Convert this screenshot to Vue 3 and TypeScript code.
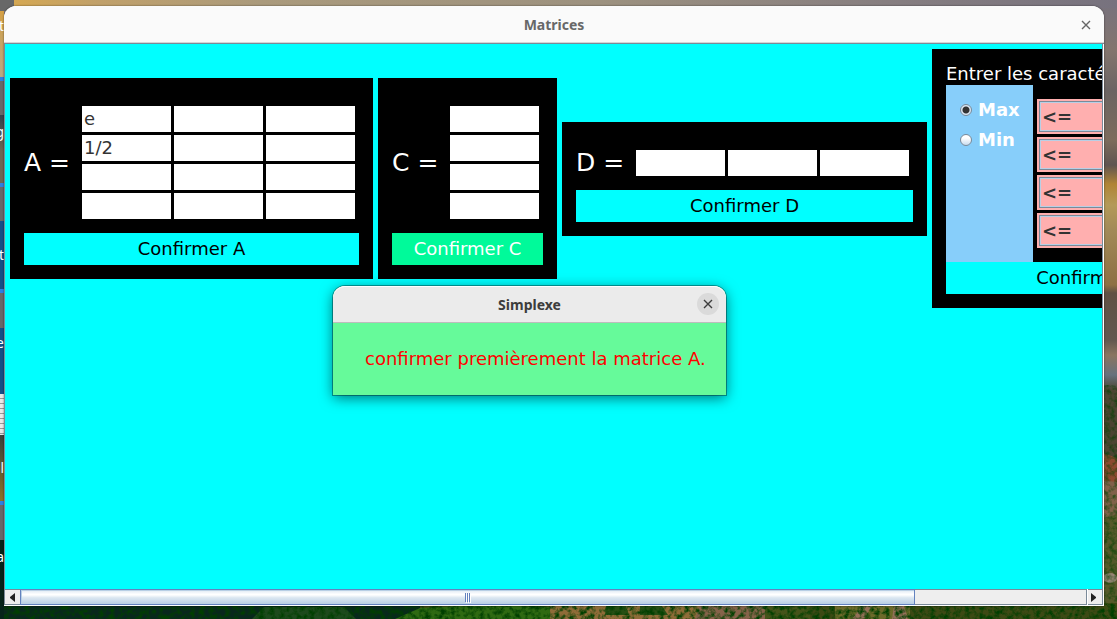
<script setup lang="ts">
import { ref } from 'vue'

interface MatrixPanel {
  name: string
  rows: number
  cols: number
  values: string[]
}

const panels = ref<MatrixPanel[]>([
  { name: 'A', rows: 4, cols: 3, values: ['e', '', '', '1/2', '', '', '', '', '', '', '', ''] },
  { name: 'C', rows: 4, cols: 1, values: ['', '', '', ''] },
  { name: 'D', rows: 1, cols: 3, values: ['', '', ''] },
])

const goal = ref('max')
const signs = ref(['<=', '<=', '<=', '<='])
const dialogOpen = ref(true)

const desktopItems = [
  { kind: 'bar', text: '' },
  { kind: 'sky', text: 't' },
  { kind: 'line', text: '' },
  { kind: 'bar', text: 'g' },
  { kind: 'line', text: '' },
  { kind: 'bar', text: '' },
  { kind: 'blue', text: 't' },
  { kind: 'line', text: '' },
  { kind: 'bar', text: '' },
  { kind: 'blue', text: 'e' },
  { kind: 'paper', text: '' },
  { kind: 'rock', text: 'l' },
  { kind: 'line', text: '' },
  { kind: 'bar', text: '' },
  { kind: 'forest', text: 'a' },
]
</script>

<template>
  <div class="desktop">
    <svg class="scenery" aria-hidden="true" preserveAspectRatio="none" viewBox="0 0 1117 619">
      <defs>
        <filter id="leaves" x="0" y="0" width="100%" height="100%">
          <feTurbulence type="fractalNoise" baseFrequency="0.2" numOctaves="3" seed="4" />
          <feColorMatrix type="matrix" values="0 0 0 0 0  0 0 0 0 0.05  0 0 0 0 0  2.6 0 0 0 -1" />
        </filter>
      </defs>
      <path d="M1100 384l17 10v225h-17z" fill="#4b4532" />
      <path d="M1100 452l17 6v36l-17 6z" fill="#8c4a30" />
      <path d="M1100 480l17 2v34l-17 2z" fill="#80614a" />
      <path d="M1100 520l17-6v105h-17z" fill="#55592a" />
      <ellipse cx="1110" cy="578" rx="7" ry="5" fill="#988575" />
      <path d="M0 603h1117v16H0z" fill="#3d4a14" />
      <path d="M0 603h420v16H0z" fill="#08281c" />
      <path d="M252 619l12-12h80l12 12z" fill="#1d4a1c" />
      <path d="M395 619l25-11 60-3 72 2v12z" fill="#2f6a12" />
      <path d="M550 603h215v16H550z" fill="#8f6c38" />
      <path d="M606 606h20l3 9h-24zM640 606h22l6 9h-28z" fill="#274f14" />
      <path d="M700 604h65v15h-70z" fill="#86634a" />
      <path d="M765 604h45v15h-45z" fill="#45541a" />
      <path d="M835 603h75v16h-75z" fill="#6d6a2a" />
      <path d="M862 606h10l-8 13h-12zM894 606h10l4 13h-16z" fill="#957058" />
      <rect y="604" width="1117" height="15" filter="url(#leaves)" />
      <rect x="1103" y="385" width="14" height="234" filter="url(#leaves)" opacity=".6" />
    </svg>
    <div class="edge" aria-hidden="true">
      <div v-for="(item, i) in desktopItems" :key="i" :class="['scrap', item.kind, 's' + i]">{{ item.text }}</div>
    </div>

    <main class="window">
      <header class="titlebar">
        <h1>Matrices</h1>
        <button class="close" type="button" aria-label="Fermer">
          <svg viewBox="0 0 10 10" width="10" height="10"><path d="M1 1l8 8M9 1L1 9" /></svg>
        </button>
      </header>

      <div class="viewport">
        <div class="panels">
          <form v-for="p in panels" :key="p.name" class="panel" @submit.prevent>
            <div class="matrix">
              <span :class="['name', { wide: p.name === 'D' }]">{{ p.name }} =</span>
              <div :class="['cells', 'cols-' + p.cols]">
                <input
                  v-for="(_, i) in p.values"
                  :key="i"
                  v-model="p.values[i]"
                  type="text"
                  :aria-label="`${p.name} ${Math.floor(i / p.cols) + 1}, ${(i % p.cols) + 1}`"
                />
              </div>
            </div>
            <button type="submit" :class="['confirm', { active: p.name === 'C' }]">Confirmer {{ p.name }}</button>
          </form>

          <form class="panel traits" @submit.prevent>
            <h2>Entrer les caractéristiques</h2>
            <div class="options">
              <div class="goals">
                <label><input v-model="goal" type="radio" name="goal" value="max" />Max</label>
                <label><input v-model="goal" type="radio" name="goal" value="min" />Min</label>
              </div>
              <div class="signs">
                <div v-for="(_, i) in signs" :key="i" class="sign">
                  <select v-model="signs[i]" :aria-label="`Contrainte ${i + 1}`">
                    <option>&lt;=</option>
                    <option>=</option>
                    <option>&gt;=</option>
                  </select>
                </div>
              </div>
            </div>
            <button type="submit" class="confirm">Confirmer</button>
          </form>
        </div>
      </div>

      <div class="scrollbar">
        <button type="button" class="arrow left" aria-label="Défiler à gauche">
          <svg viewBox="0 0 5 9" width="5" height="9"><path d="M5 0v9L0 5V4z" /></svg>
        </button>
        <div class="track">
          <div class="thumb"><i></i><i></i><i></i></div>
        </div>
        <button type="button" class="arrow right" aria-label="Défiler à droite">
          <svg viewBox="0 0 5 9" width="5" height="9"><path d="M0 0v9l5-4V4z" /></svg>
        </button>
      </div>
    </main>

    <section v-if="dialogOpen" class="dialog" role="dialog" aria-labelledby="dialog-title">
      <header class="dialog-bar">
        <h2 id="dialog-title">Simplexe</h2>
        <button class="close round" type="button" aria-label="Fermer" @click="dialogOpen = false">
          <svg viewBox="0 0 10 10" width="10" height="10"><path d="M1 1l8 8M9 1L1 9" /></svg>
        </button>
      </header>
      <p>confirmer premièrement la matrice A.</p>
    </section>
  </div>
</template>

<style>
body {
  margin: 0;
}
</style>

<style scoped>
* {
  box-sizing: border-box;
}
.desktop {
  position: relative;
  display: flex;
  height: 100vh;
  padding: 6px 13px 13px 4px;
  overflow: hidden;
  font-family: "DejaVu Sans", sans-serif;
  font-size: 18px;
  background:
    linear-gradient(90deg, #d8a94f 0, #c0a06a 100px, #aa9a7c 260px, #9c917f 600px, #857d80 900px, #77727e) top / 100% 8px no-repeat,
    linear-gradient(#77727e 0, #83756e 50px, #6b6463 90px, #7c6c5c 140px, #5f5450 165px, #b08435 184px, #b49a58 205px, #a28a58 230px, #8d7043 285px, #5f5144 293px, #625850 340px, #8a7560 355px, #67727d 375px, #4b4532 390px, #4b4532);
}
.scenery {
  position: absolute;
  inset: 0;
  width: 100%;
  height: 100%;
}
.edge {
  position: absolute;
  left: 0;
  top: 0;
  width: 14px;
  height: 100%;
  overflow: hidden;
  display: flex;
  flex-direction: column;
  font-family: "Noto Sans", sans-serif;
  font-size: 14px;
  line-height: 20px;
  color: #fff;
}
.scrap {
  display: flex;
  flex: none;
  align-items: center;
  justify-content: flex-end;
  width: 4px;
}
.bar { background: #686868; }
.sky { background: linear-gradient(#d5a044, #b8a883); }
.line { height: 4px; background: #2f80e0; }
.blue { background: #164e86; }
.paper { background: repeating-linear-gradient(#e8e8e8 0, #e8e8e8 4px, #999 4px, #999 5px); }
.rock { background: linear-gradient(#39413c, #8b7228); }
.forest { background: #06241a; }
.s0 { width: 14px; height: 11px; }
.s1 { height: 66px; padding-bottom: 36px; }
.s3 { height: 102px; background: linear-gradient(#686868 34px, #34414c 34px, #6d6655 70px); }
.s5 { height: 34px; }
.s6 { height: 68px; }
.s8 { height: 35px; }
.s9 { height: 66px; padding-bottom: 36px; }
.s10 { height: 41px; }
.s11 { height: 66px; }
.s13 { height: 35px; }
.s14 { height: 79px; padding-bottom: 46px; }

.window {
  position: relative;
  display: flex;
  flex: 1;
  flex-direction: column;
  min-width: 0;
  overflow: hidden;
  border-radius: 12px 12px 0 0;
  box-shadow: 0 0 2px rgba(0, 0, 0, 0.6);
  background: #fff;
}
.titlebar,
.dialog-bar {
  position: relative;
  display: flex;
  flex: none;
  align-items: center;
  justify-content: center;
}
.titlebar {
  height: 38px;
  border-bottom: 1px solid #7a8a99;
  background: linear-gradient(#fafafa 36px, #d5d5d5 36px);
  color: #686868;
}
.titlebar h1,
.dialog-bar h2 {
  margin: 0;
  font: bold 14px/20px "Noto Sans", sans-serif;
}
.close {
  position: absolute;
  right: 7px;
  display: flex;
  align-items: center;
  justify-content: center;
  width: 22px;
  height: 22px;
  padding: 0;
  border: 0;
  border-radius: 50%;
  background: none;
}
.close svg {
  fill: none;
  stroke: #666;
  stroke-width: 1.4;
}
.close.round {
  background: #dadada;
}
.close.round svg {
  stroke: #3d3d3d;
}

.viewport {
  flex: 1;
  min-height: 0;
  margin-right: 1px;
  overflow: hidden;
  border: solid #7a8a99;
  border-width: 0 1px;
  background: #0ff;
}
.panels {
  display: flex;
  align-items: center;
  gap: 5px;
  width: max-content;
  padding: 5px;
}
.panel {
  flex: none;
  padding: 14px;
  background: #000;
  color: #fff;
}
.matrix {
  display: flex;
  align-items: center;
  gap: 12px;
  padding: 14px 4px 14px 0;
}
.name {
  width: 46px;
  font-size: 25px;
  line-height: 26px;
  white-space: nowrap;
}
.name.wide {
  width: 48px;
}
.cells {
  display: grid;
  gap: 3px;
}
.cols-1 { grid-template-columns: 89px; }
.cols-3 { grid-template-columns: repeat(3, 89px); }
.cells input {
  width: 100%;
  height: 26px;
  padding: 0 2px;
  border: 0;
  outline: 0;
  background: #fff;
  color: #333;
  font: 18px/26px "DejaVu Sans", sans-serif;
}
.confirm {
  display: block;
  width: 100%;
  height: 32px;
  padding: 0;
  border: 0;
  background: #0ff;
  color: #000;
  font: 18px/32px "DejaVu Sans", sans-serif;
}
.confirm.active {
  background: #00fa9a;
  color: #fff;
}
.traits {
  width: 298px;
}
.traits h2 {
  margin: 0;
  font-size: 18px;
  font-weight: normal;
  line-height: 22px;
  white-space: nowrap;
}
.options {
  display: flex;
  gap: 4px;
}
.goals {
  display: flex;
  flex-direction: column;
  gap: 8px;
  width: 87px;
  padding: 14px;
  background: #87cefa;
}
.goals label {
  display: flex;
  align-items: center;
  gap: 6px;
  font-weight: bold;
  line-height: 22px;
}
.goals input {
  appearance: none;
  flex: none;
  width: 12px;
  height: 12px;
  margin: 0;
  border: 1px solid #7a8a99;
  border-radius: 50%;
  background: linear-gradient(#fff 30%, #c8dcee);
}
.goals input:checked {
  background: radial-gradient(circle, #333 3px, #dce8f4 4px);
}
.signs {
  display: flex;
  flex: 1;
  flex-direction: column;
  gap: 3px;
  padding: 14px 0;
}
.sign {
  display: flex;
  height: 35px;
  padding: 2px;
  background: #ffafaf;
}
.sign select {
  appearance: none;
  width: 100%;
  padding: 0 2px;
  border: 1px solid #7a8a99;
  border-radius: 0;
  outline: 0;
  box-shadow: inset 0 0 0 1px #b8cfe5;
  background: #ffafaf;
  color: #333;
  font: bold 18px/27px "DejaVu Sans", sans-serif;
}

.scrollbar {
  display: flex;
  flex: none;
  height: 17px;
  border: solid #fff;
  border-width: 0 1px 1px 0;
  background: #eee;
  box-shadow: inset 0 1px #7a8a99, inset 0 -1px #7a8a99, inset 1px 0 #7a8a99, inset -1px 0 #7a8a99;
}
.arrow {
  display: flex;
  flex: none;
  align-items: center;
  justify-content: center;
  width: 16px;
  padding: 0;
  border: 0;
  background: none;
}
.arrow svg {
  fill: #222;
}
.arrow.right {
  width: 17px;
  padding-right: 3px;
  border-left: 1px solid #7a8a99;
  box-shadow: inset 1px 0 #fff;
}
.track {
  flex: 1;
  display: flex;
}
.thumb {
  display: flex;
  align-items: center;
  justify-content: center;
  gap: 1px;
  width: 84%;
  border: 1px solid #6382bf;
  box-shadow: inset 1px 1px #b8cfe5;
  background: linear-gradient(#dde8f3, #fff 30%, #fff 35%, #dce7f1 55%, #b8cfe5);
}
.thumb i {
  width: 1px;
  height: 9px;
  background: #6382bf;
  box-shadow: 1px 1px #fff;
}

.dialog {
  position: absolute;
  left: 333px;
  top: 286px;
  width: 393px;
  border-radius: 12px 12px 0 0;
  box-shadow: 0 0 0 1px rgba(0, 0, 0, 0.35), 0 3px 14px rgba(0, 0, 0, 0.55);
  background: #66fa9a;
}
.dialog-bar {
  height: 37px;
  border-bottom: 1px solid #bdbdbd;
  border-radius: 12px 12px 0 0;
  box-shadow: inset 0 1px #fff;
  background: #ebebeb;
  color: #3d3d3d;
}
.dialog-bar h2 {
  padding-top: 2px;
}
.dialog p {
  margin: 0;
  padding: 25px 22px 25px 32px;
  color: #f00;
  line-height: 22px;
  white-space: nowrap;
}
</style>
